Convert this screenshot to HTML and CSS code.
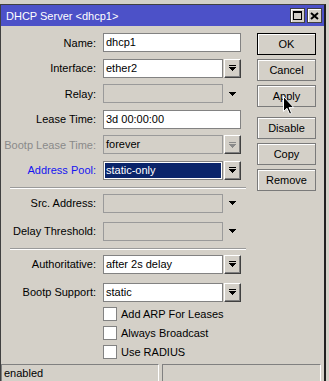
FILE: index.html
```html
<!DOCTYPE html>
<html lang="en">
<head>
  <meta charset="UTF-8" />
  <title>DHCP Server &lt;dhcp1&gt;</title>
  <link rel="stylesheet" href="styles.css">
</head>
<body>
<div class="window">
  <div class="titlebar">
    <span class="title">DHCP Server &lt;dhcp1&gt;</span>
    <div class="title-btns">
      <span class="tbtn"><span class="max-glyph"></span></span>
      <span class="tbtn">
        <svg width="9" height="8" viewBox="0 0 9 8"><path d="M1 1L8 7M8 1L1 7" stroke="#000" stroke-width="2"/></svg>
      </span>
    </div>
  </div>

  <div class="content">
    <div class="form">
      <div class="group top">
        <div class="row">
          <label>Name:</label>
          <div class="field wide">dhcp1</div>
        </div>
        <div class="row">
          <label>Interface:</label>
          <div class="field">ether2</div>
          <span class="dd"><svg width="7" height="6" viewBox="0 0 7 6"><path d="M0 0h7v1H0zM0 2h7v1H6v1H5v1H4v1H3V5H2V4H1V3H0z"/></svg></span>
        </div>
        <div class="row">
          <label>Relay:</label>
          <div class="field off"></div>
          <span class="arrow"><svg width="7" height="4" viewBox="0 0 7 4"><path d="M0 0h7v1H6v1H5v1H4v1H3V3H2V2H1V1H0z"/></svg></span>
        </div>
        <div class="row">
          <label>Lease Time:</label>
          <div class="field wide">3d 00:00:00</div>
        </div>
        <div class="row">
          <label class="muted">Bootp Lease Time:</label>
          <div class="field off">forever</div>
          <span class="dd"><svg width="7" height="6" viewBox="0 0 7 6" fill="#8a8a8a"><path d="M0 0h7v1H0zM0 2h7v1H6v1H5v1H4v1H3V5H2V4H1V3H0z"/></svg></span>
        </div>
        <div class="row">
          <label class="link">Address Pool:</label>
          <div class="field selected">static-only</div>
          <span class="dd"><svg width="7" height="6" viewBox="0 0 7 6"><path d="M0 0h7v1H0zM0 2h7v1H6v1H5v1H4v1H3V5H2V4H1V3H0z"/></svg></span>
        </div>
      </div>

      <div class="sep"></div>

      <div class="group">
        <div class="row">
          <label>Src. Address:</label>
          <div class="field off"></div>
          <span class="arrow"><svg width="7" height="4" viewBox="0 0 7 4"><path d="M0 0h7v1H6v1H5v1H4v1H3V3H2V2H1V1H0z"/></svg></span>
        </div>
        <div class="row">
          <label>Delay Threshold:</label>
          <div class="field off"></div>
          <span class="arrow"><svg width="7" height="4" viewBox="0 0 7 4"><path d="M0 0h7v1H6v1H5v1H4v1H3V3H2V2H1V1H0z"/></svg></span>
        </div>
      </div>

      <div class="sep"></div>

      <div class="group">
        <div class="row">
          <label>Authoritative:</label>
          <div class="field">after 2s delay</div>
          <span class="dd"><svg width="7" height="6" viewBox="0 0 7 6"><path d="M0 0h7v1H0zM0 2h7v1H6v1H5v1H4v1H3V5H2V4H1V3H0z"/></svg></span>
        </div>
        <div class="row">
          <label>Bootp Support:</label>
          <div class="field">static</div>
          <span class="dd"><svg width="7" height="6" viewBox="0 0 7 6"><path d="M0 0h7v1H0zM0 2h7v1H6v1H5v1H4v1H3V5H2V4H1V3H0z"/></svg></span>
        </div>
      </div>

      <div class="checks">
        <div class="check"><span class="box"></span>Add ARP For Leases</div>
        <div class="check"><span class="box"></span>Always Broadcast</div>
        <div class="check"><span class="box"></span>Use RADIUS</div>
      </div>
    </div>

    <div class="actions">
      <button class="btn default">OK</button>
      <button class="btn">Cancel</button>
      <button class="btn">Apply</button>
      <button class="btn spaced">Disable</button>
      <button class="btn">Copy</button>
      <button class="btn">Remove</button>
    </div>
  </div>

  <div class="statusbar">
    <div class="panel left">enabled</div>
    <div class="panel right"></div>
  </div>
</div>

<!-- mouse pointer resting on Apply -->
<svg class="cursor" width="12" height="19" viewBox="0 0 12 19">
  <path d="M0.5 0.5V15.5L4 12.3L6.6 18.2L8.6 17.3L6.1 11.6H10.8Z" fill="#000" stroke="#fff" stroke-width="1"/>
</svg>
</body>
</html>
```

FILE: styles.css
```css
* {
  box-sizing: border-box;
}
body {
  margin: 0;
  height: 381px;
  overflow: hidden;
  background: #d4d0c8;
  font-family: "Liberation Sans", Arial, sans-serif;
  font-size: 11px;
  color: #000;
}
.window {
  margin-top: 4px;
  width: 326px;
  height: 379px;
  display: flex;
  flex-direction: column;
  background: #d4d0c8;
  border-top: 1px solid #404040;
  border-left: 1px solid #404040;
  border-right: 2px solid #202020;
}
.titlebar {
  height: 21px;
  flex-shrink: 0;
  display: flex;
  align-items: center;
  justify-content: space-between;
  padding: 0 2px 0 5px;
  background: #4c51c8;
  color: #fff;
}
.title-btns {
  display: flex;
  gap: 2px;
}
.tbtn {
  width: 15px;
  height: 15px;
  display: flex;
  align-items: center;
  justify-content: center;
  background: #d4d0c8;
  border: 1px solid #404040;
  box-shadow: inset 1px 1px #fff;
}
.max-glyph {
  width: 9px;
  height: 9px;
  border: 1px solid #000;
  border-top-width: 2px;
}

.content {
  flex: 1;
  display: flex;
  padding-top: 7px;
}
.form {
  width: 240px;
}
.group {
  display: flex;
  flex-direction: column;
  gap: 9px;
}
.group.top {
  gap: 6.5px;
}
.row {
  display: flex;
  align-items: center;
  height: 19px;
}
.row label {
  width: 95px;
  margin-right: 7px;
  text-align: right;
  white-space: nowrap;
}
.row label.muted {
  color: #8a8a8a;
}
.row label.link {
  color: #1515f0;
}
.field {
  width: 120px;
  height: 19px;
  padding-left: 2px;
  line-height: 17px;
  background: #fff;
  border: 1px solid #828282;
  white-space: nowrap;
}
.field.wide {
  width: 138px;
}
.field.off {
  background: #d4d0c8;
  border-color: #9a9a9a;
}
.field.selected {
  background: #0a246a;
  color: #fff;
  box-shadow: inset 0 0 0 1px #fff;
}
.dd {
  width: 17px;
  height: 19px;
  margin-left: 1px;
  display: flex;
  align-items: center;
  justify-content: center;
  background: #d4d0c8;
  border: 1px solid;
  border-color: #fff #404040 #404040 #fff;
  box-shadow: inset -1px -1px #808080;
}
.arrow {
  width: 17px;
  margin-left: 1px;
  display: flex;
  justify-content: center;
}
.sep {
  margin: 7px 0 5px 9px;
  width: 236px;
  border-top: 1px solid #9a9a9a;
  border-bottom: 1px solid #fff;
}

.checks {
  margin: 5px 0 0 102px;
  display: flex;
  flex-direction: column;
  gap: 5px;
}
.check {
  height: 14px;
  display: flex;
  align-items: center;
  gap: 4px;
}
.box {
  width: 14px;
  height: 14px;
  background: #fff;
  border: 1px solid #828282;
}

.actions {
  width: 59px;
  margin-left: 16px;
  display: flex;
  flex-direction: column;
  gap: 4px;
}
.btn {
  width: 59px;
  height: 22px;
  padding: 0;
  font: inherit;
  color: #000;
  background: #d4d0c8;
  border: 1px solid #7a7a7a;
  box-shadow: inset 1px 1px #fff;
}
.btn.default {
  border-color: #000;
}
.btn.spaced {
  margin-top: 6px;
}

.statusbar {
  height: 20px;
  flex-shrink: 0;
  display: flex;
  gap: 3px;
  padding: 1px 3px 0 0;
}
.panel {
  height: 18px;
  line-height: 16px;
  padding-left: 2px;
  border: 1px solid;
  border-color: #808080 #fff #fff #808080;
}
.panel.left {
  width: 158px;
}
.panel.right {
  flex: 1;
}

.cursor {
  position: absolute;
  left: 283px;
  top: 96px;
}
```
